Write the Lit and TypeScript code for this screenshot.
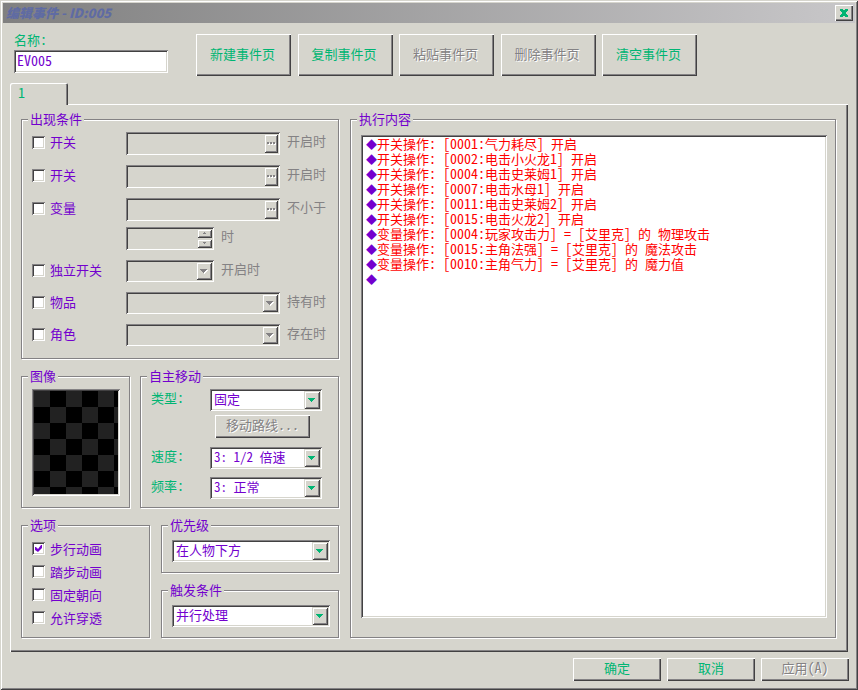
import { LitElement, html, css, svg } from "lit";
import { customElement, property } from "lit/decorators.js";

/* Colours, bevels and controls shared by every element of the dialog. */
const shared = css`
  :host {
    --face: #d6d5cd;
    --shade: #848284;
    --dark: #424142;
    --green: #00b573;
    --purple: #7300ce;
    --raised: inset 1px 1px #fff, inset -1px -1px var(--dark), inset -2px -2px var(--shade);
    --raised-small: inset 1px 1px var(--face), inset -1px -1px var(--dark), inset 2px 2px #fff,
      inset -2px -2px var(--shade);
    --sunken: inset 1px 1px var(--shade), inset -1px -1px #fff, inset 2px 2px var(--dark),
      inset -2px -2px var(--face);
    font: 13px/18px "Noto Sans CJK SC", sans-serif;
    color: var(--purple);
  }
  *, *::before, *::after { box-sizing: border-box; }
  button, input, select { font: inherit; color: inherit; margin: 0; border: 0; border-radius: 0; outline: 0; }
  button { padding: 0; background: var(--face); box-shadow: var(--raised); color: var(--green); }
  button:disabled { color: var(--shade); text-shadow: 1px 1px #fff; }
  .half { font-size: 14px; font-feature-settings: "hwid"; white-space: pre; line-height: 1px; }
`;

/* Sets runs of Latin text in half-width cells beside the full-width characters. */
const mixed = (text: string) =>
  text.split(/([\x20-\x7e]+)/).map((part) =>
    /^[\x20-\x7e]/.test(part) ? html`<span class="half">${part}</span>` : part
  );

@customElement("combo-box")
export class ComboBox extends LitElement {
  @property() value = "";
  @property() label = "";
  @property({ type: Boolean }) disabled = false;

  static styles = [
    shared,
    css`
      :host { display: grid; position: relative; height: 22px; }
      select {
        appearance: none;
        width: 100%;
        padding: 0 20px 2px 4px;
        background: #fff;
        box-shadow: var(--sunken);
        color: var(--purple);
        font-feature-settings: "hwid";
        opacity: 1;
      }
      select:disabled { background: var(--face); }
      .drop {
        position: absolute;
        right: 2px;
        top: 2px;
        bottom: 2px;
        width: 16px;
        display: grid;
        place-items: center;
        background: var(--face);
        box-shadow: var(--raised-small);
        color: var(--green);
        pointer-events: none;
      }
      .drop.off { color: var(--shade); }
      .drop.off svg { filter: drop-shadow(1px 1px #fff); }
      svg { display: block; }
    `,
  ];

  render() {
    return html`
      <select aria-label=${this.label} ?disabled=${this.disabled}>
        ${this.value ? html`<option>${this.value}</option>` : ""}
      </select>
      <span class="drop ${this.disabled ? "off" : ""}">
        <svg width="8" height="4" shape-rendering="crispEdges" aria-hidden="true">
          <path d="M0 0h7v1h-1v1h-1v1h-1v1h-1v-1h-1v-1h-1v-1h-1z" fill="currentColor" />
        </svg>
      </span>
    `;
  }
}

@customElement("check-item")
export class CheckItem extends LitElement {
  @property() text = "";
  @property({ type: Boolean }) checked = false;

  static styles = [
    shared,
    css`
      :host { display: block; }
      label { display: flex; align-items: center; gap: 5px; height: 100%; line-height: 20px; }
      input {
        appearance: none;
        position: relative;
        width: 13px;
        height: 13px;
        background: #fff;
        box-shadow: var(--sunken);
      }
      input:checked::after {
        content: "";
        position: absolute;
        inset: 3px;
        background: var(--purple);
        clip-path: polygon(0 29%, 14% 29%, 43% 57%, 86% 0, 100% 0, 100% 43%, 43% 100%, 0 71%);
      }
    `,
  ];

  render() {
    return html`<label><input type="checkbox" .checked=${this.checked} />${this.text}</label>`;
  }
}

@customElement("app-root")
export class AppRoot extends LitElement {
  static styles = [
    shared,
    css`
      :host {
        display: flex;
        flex-direction: column;
        min-height: 100vh;
        box-sizing: border-box;
        padding: 3px;
        background: var(--face);
        box-shadow: inset 1px 1px var(--face), inset -1px -1px var(--dark), inset 2px 2px #fff,
          inset -2px -2px var(--shade);
      }
      .title {
        display: flex;
        align-items: center;
        justify-content: space-between;
        height: 20px;
        padding: 0 2px 0 3px;
        background: linear-gradient(90deg, #808080, #c8c7c9);
      }
      h1 { margin: 0; padding-bottom: 1px; font: italic 900 13px/18px "Noto Sans CJK SC", sans-serif; color: #5f6ba3; }
      .close { display: grid; place-items: center; width: 18px; height: 16px; }
      .top { display: flex; gap: 28px; height: 44px; margin: 9px 11px 7px; }
      .name { display: grid; grid-template-rows: 18px 23px; width: 154px; color: var(--green); line-height: 16px; }
      .name input {
        width: 100%;
        padding: 0 4px 4px 3px;
        background: #fff;
        box-shadow: var(--sunken);
        color: var(--purple);
        font-size: 14px;
        font-feature-settings: "hwid";
      }
      .commands { display: flex; align-self: flex-end; justify-content: space-between; width: 501px; }
      .commands button { width: 95px; height: 42px; padding: 0 2px 3px 0; }
      .tab {
        position: relative;
        align-self: flex-start;
        width: 58px;
        height: 22px;
        margin: 0 7px -1px;
        padding: 0 8px 2px;
        border-radius: 2px 2px 0 0;
        text-align: left;
        box-shadow: inset 1px 1px #fff, inset -1px 0 var(--dark), inset -2px 0 var(--shade);
      }
      .page {
        flex: 1;
        display: flex;
        gap: 11px;
        margin: 0 7px;
        padding: 6px 12px 14px 11px;
        box-shadow: var(--raised);
      }
      .side { display: flex; flex-direction: column; gap: 8px; width: 318px; }
      .pair { display: flex; gap: 10px; }
      .stack { display: flex; flex-direction: column; gap: 8px; flex: 1; }
      fieldset {
        min-width: 0;
        margin: 0;
        padding: 4px 8px 8px 10px;
        border: 1px solid var(--shade);
        box-shadow: 1px 1px #fff, inset 1px 1px #fff;
      }
      legend { margin-left: -4px; padding: 0 2px; height: 18px; background: var(--face); }
      .conditions { display: flex; flex-direction: column; gap: 10px; padding-bottom: 4px; }
      .value { display: flex; flex-direction: column; gap: 6px; }
      .row { display: flex; align-items: flex-start; color: var(--shade); }
      .row check-item, .row .blank { width: 94px; }
      .row .suffix { margin-left: 7px; }
      .row combo-box { width: 154px; }
      .row .short { width: 88px; }
      .field { display: flex; width: 154px; height: 23px; padding: 2px; box-shadow: var(--sunken); }
      .field input { flex: 1; min-width: 0; padding: 0 4px; background: none; }
      .field > button { display: grid; place-items: center; width: 14px; box-shadow: var(--raised-small); }
      .spin { display: grid; grid-template-rows: 1fr 1fr; gap: 1px; width: 15px; }
      .spin button { display: grid; place-items: center; box-shadow: var(--raised-small); }
      .picture { width: 109px; }
      .tiles { width: 88px; height: 107px; padding: 2px; box-shadow: var(--sunken); }
      .tiles div {
        height: 100%;
        background: repeating-conic-gradient(#000 0 25%, #222 0 50%) 0 0 / 32px 32px;
      }
      .moves { flex: 1; }
      .move { display: grid; grid-template-columns: 59px 112px; color: var(--green); line-height: 18px; }
      .move + .move { margin-top: 8px; }
      .route { display: block; width: 95px; height: 23px; margin: 4px 0 9px 64px; padding-bottom: 3px; }
      .options { width: 129px; padding-top: 3px; }
      .options check-item { height: 23px; }
      .stack fieldset { padding: 6px 8px 10px 10px; margin-left: 1px; }
      .content { flex: 1; display: flex; padding: 7px 8px 19px 10px; }
      .list {
        flex: 1;
        margin: 0;
        padding: 1px 5px;
        list-style: none;
        background: #fff;
        box-shadow: var(--sunken);
        color: #f00;
        line-height: 15px;
      }
      .list li { display: flex; height: 15px; white-space: nowrap; }
      .list .half { line-height: inherit; }
      .mark { width: 11px; color: var(--purple); font-size: 11px; line-height: 16px; }
      .footer { display: flex; justify-content: flex-end; gap: 6px; padding: 6px; }
      .footer button { width: 88px; height: 23px; padding-bottom: 3px; }
    `,
  ];

  private commands = [
    ["新建事件页", true],
    ["复制事件页", true],
    ["粘贴事件页", false],
    ["删除事件页", false],
    ["清空事件页", true],
  ] as const;

  private actions = [
    "开关操作: [0001:气力耗尽] 开启",
    "开关操作: [0002:电击小火龙1] 开启",
    "开关操作: [0004:电击史莱姆1] 开启",
    "开关操作: [0007:电击水母1] 开启",
    "开关操作: [0011:电击史莱姆2] 开启",
    "开关操作: [0015:电击火龙2] 开启",
    "变量操作: [0004:玩家攻击力] = [艾里克] 的 物理攻击",
    "变量操作: [0015:主角法强] = [艾里克] 的 魔法攻击",
    "变量操作: [0010:主角气力] = [艾里克] 的 魔力值",
    "",
  ];

  private picker(text: string, suffix: string) {
    return html`
      <div class="row">
        <check-item text=${text}></check-item>
        <div class="field">
          <input type="text" aria-label=${text} disabled />
          <button disabled aria-label=${text}>
            <svg width="9" height="3" shape-rendering="crispEdges">
              <path d="M1 1h2v2h-2zM4 1h2v2h-2zM7 1h2v2h-2z" fill="#fff" />
              <path d="M0 0h2v2h-2zM3 0h2v2h-2zM6 0h2v2h-2z" fill="#848284" />
            </svg>
          </button>
        </div>
        <span class="suffix">${suffix}</span>
      </div>
    `;
  }

  private chooser(text: string, suffix: string, size = "") {
    return html`
      <div class="row">
        <check-item text=${text}></check-item>
        <combo-box class=${size} label=${text} disabled></combo-box>
        <span class="suffix">${suffix}</span>
      </div>
    `;
  }

  private spinArrow(up: boolean) {
    const arrow = up ? "M1 0h1v1h1v1h-3v-1h1z" : "M0 0h3v1h-1v1h-1v-1h-1z";
    return html`<svg width="4" height="3" shape-rendering="crispEdges">
      ${svg`<path d=${arrow} fill="#848284" />`}
    </svg>`;
  }

  private move(text: string, value: string) {
    return html`
      <div class="move"><span>${mixed(text + ":")}</span><combo-box label=${text} value=${value}></combo-box></div>
    `;
  }

  render() {
    return html`
      <header class="title">
        <h1>编辑事件 - ID:005</h1>
        <button class="close" aria-label="×">
          <svg width="8" height="8" shape-rendering="crispEdges">
            <path
              d="M0 0h3v1h2v-1h3v2h-1v1h-1v2h1v1h1v2h-3v-1h-2v1h-3v-2h1v-1h1v-2h-1v-1h-1z"
              fill="#00b573"
            />
          </svg>
        </button>
      </header>

      <div class="top">
        <label class="name"><span>${mixed("名称:")}</span><input type="text" .value=${"EV005"} /></label>
        <div class="commands">
          ${this.commands.map(([text, on]) => html`<button ?disabled=${!on}>${text}</button>`)}
        </div>
      </div>

      <button class="tab">${mixed("1")}</button>
      <main class="page">
        <div class="side">
          <fieldset>
            <legend>出现条件</legend>
            ${this.conditions()}
          </fieldset>

          <div class="pair">
            <fieldset class="picture">
              <legend>图像</legend>
              <div class="tiles"><div></div></div>
            </fieldset>
            <fieldset class="moves">
              <legend>自主移动</legend>
              ${this.move("类型", "固定")}
              <button class="route" disabled>${mixed("移动路线...")}</button>
              ${this.move("速度", "3: 1/2 倍速")} ${this.move("频率", "3: 正常")}
            </fieldset>
          </div>

          <div class="pair">
            <fieldset class="options">
              <legend>选项</legend>
              <check-item text="步行动画" checked></check-item>
              <check-item text="踏步动画"></check-item>
              <check-item text="固定朝向"></check-item>
              <check-item text="允许穿透"></check-item>
            </fieldset>
            <div class="stack">
              <fieldset>
                <legend>优先级</legend>
                <combo-box label="优先级" value="在人物下方"></combo-box>
              </fieldset>
              <fieldset>
                <legend>触发条件</legend>
                <combo-box label="触发条件" value="并行处理"></combo-box>
              </fieldset>
            </div>
          </div>
        </div>

        <fieldset class="content">
          <legend>执行内容</legend>
          <ul class="list">
            ${this.actions.map((text) => html`<li><span class="mark">◆</span><span>${mixed(text)}</span></li>`)}
          </ul>
        </fieldset>
      </main>

      <footer class="footer">
        <button>确定</button>
        <button>取消</button>
        <button disabled>${mixed("应用(A)")}</button>
      </footer>
    `;
  }

  private conditions() {
    return html`
      <div class="conditions">
        ${this.picker("开关", "开启时")} ${this.picker("开关", "开启时")}
        <div class="value">
          ${this.picker("变量", "不小于")}
          <div class="row">
            <span class="blank"></span>
            <div class="field short">
              <input type="text" aria-label="变量" disabled />
              <span class="spin">
                <button disabled aria-label="+">${this.spinArrow(true)}</button>
                <button disabled aria-label="-">${this.spinArrow(false)}</button>
              </span>
            </div>
            <span class="suffix">时</span>
          </div>
        </div>
        ${this.chooser("独立开关", "开启时", "short")} ${this.chooser("物品", "持有时")}
        ${this.chooser("角色", "存在时")}
      </div>
    `;
  }
}
